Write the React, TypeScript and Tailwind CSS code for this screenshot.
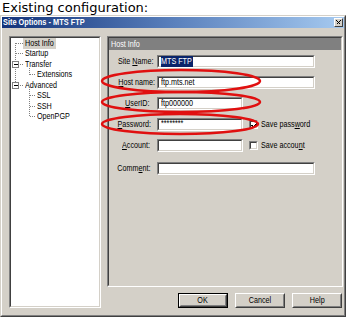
import React from 'react';
import clsx from 'clsx';

// Narrow text: Tahoma-at-small-scale look, squeezed horizontally
function T({ children, o = 'left', bold, className }: { children: React.ReactNode; o?: 'left' | 'right' | 'center'; bold?: boolean; className?: string }) {
  return (
    <span
      className={clsx(
        'inline-block whitespace-nowrap',
        o === 'left' && 'origin-left',
        o === 'right' && 'origin-right',
        o === 'center' && 'origin-center',
        bold ? 'scale-x-[0.82]' : 'scale-x-[0.8]',
        className
      )}
    >
      {children}
    </span>
  );
}

// Win2000 style 3D frames
function Sunken({ className, innerClassName, children }: { className?: string; innerClassName?: string; children?: React.ReactNode }) {
  return (
    <div className={clsx('border border-t-[#808080] border-l-[#808080] border-b-white border-r-white', className)}>
      <div className={clsx('h-full w-full border border-t-[#404040] border-l-[#404040] border-b-[#d4d0c8] border-r-[#d4d0c8]', innerClassName ?? 'bg-white')}>
        {children}
      </div>
    </div>
  );
}

function Button({ label, isDefault }: { label: string; isDefault?: boolean }) {
  return (
    <div className={clsx('h-[15px] w-[50px]', isDefault && 'border border-black')}>
      <div className="h-full w-full border border-t-white border-l-white border-b-[#404040] border-r-[#404040]">
        <div className="flex h-full w-full items-center justify-center border border-t-[#d4d0c8] border-l-[#d4d0c8] border-b-[#808080] border-r-[#808080] text-[9px] leading-none text-black">
          <T o="center">{label}</T>
        </div>
      </div>
    </div>
  );
}

function Checkbox({ checked }: { checked?: boolean }) {
  return (
    <Sunken className="h-[9px] w-[9px] shrink-0">
      {checked && (
        <svg viewBox="0 0 7 7" className="block h-[7px] w-[7px]" shapeRendering="crispEdges">
          <path d="M0.5 3 L2.5 5 L6.5 1" stroke="#000" strokeWidth="1.4" fill="none" />
        </svg>
      )}
    </Sunken>
  );
}

interface FieldRowProps {
  label: React.ReactNode;
  value?: React.ReactNode;
  wide?: boolean;
  extra?: React.ReactNode;
  className?: string;
}

function FieldRow({ label, value, wide, extra, className }: FieldRowProps) {
  return (
    <div className={clsx('flex h-[13px] items-center', className)}>
      <div className="w-[41px] text-right text-[9px] leading-none text-black">
        <T o="right">{label}</T>
      </div>
      <Sunken className={clsx('ml-[7px] h-[13px]', wide ? 'w-[158px]' : 'w-[86px]')}>
        <div className="flex h-full items-center pl-[2px] text-[9px] leading-none text-black">{value}</div>
      </Sunken>
      {extra}
    </div>
  );
}

const treeItems = [
  { label: 'Host Info', child: false, selected: true },
  { label: 'Startup', child: false },
  { label: 'Transfer', child: false },
  { label: 'Extensions', child: true },
  { label: 'Advanced', child: false },
  { label: 'SSL', child: true },
  { label: 'SSH', child: true },
  { label: 'OpenPGP', child: true },
];

function TreeLines() {
  const c = (i: number) => 5.25 + i * 10.5;
  const dot = { stroke: '#808080', strokeWidth: 1, strokeDasharray: '1 1' };
  return (
    <svg className="pointer-events-none absolute left-0 top-0" width="90" height="90" shapeRendering="crispEdges">
      <line x1="4.5" y1={c(0)} x2="4.5" y2={c(4)} {...dot} />
      {[0, 1, 2, 4].map((i) => (
        <line key={i} x1="5" y1={Math.floor(c(i)) + 0.5} x2="12" y2={Math.floor(c(i)) + 0.5} {...dot} />
      ))}
      <line x1="18.5" y1={c(2) + 4} x2="18.5" y2={c(3)} {...dot} />
      <line x1="18.5" y1={c(4) + 4} x2="18.5" y2={c(7)} {...dot} />
      {[3, 5, 6, 7].map((i) => (
        <line key={i} x1="19" y1={Math.floor(c(i)) + 0.5} x2="24" y2={Math.floor(c(i)) + 0.5} {...dot} />
      ))}
      {[2, 4].map((i) => {
        const y = Math.floor(c(i));
        return (
          <g key={i}>
            <rect x="1.5" y={y - 3 + 0.5} width="6" height="6" fill="#fff" stroke="#808080" />
            <line x1="3" y1={y + 0.5} x2="7" y2={y + 0.5} stroke="#000" />
          </g>
        );
      })}
    </svg>
  );
}

export default function App() {
  return (
    <div className="relative h-[317px] w-[350px] overflow-hidden bg-white font-['Liberation_Sans',Arial,sans-serif]">
      <div className="h-[15px] pl-[2px] font-['DejaVu_Sans',sans-serif] text-[13px] leading-[15px] text-black">
        Existing configuration:
      </div>

      {/* dialog */}
      <div className="h-[302px] w-[346px] border border-t-[#d4d0c8] border-l-[#d4d0c8] border-b-[#404040] border-r-[#404040]">
        <div className="flex h-full w-full flex-col border border-t-white border-l-white border-b-[#808080] border-r-[#808080] bg-[#d4d0c8]">
          <div className="flex h-[11px] items-center justify-between bg-gradient-to-r from-[#14337a] via-[#5a80bc] to-[#a6caf0] pl-[1px] pr-[1px]">
            <span className="text-[9px] font-bold leading-none text-white">
              <T bold>Site Options - MTS FTP</T>
            </span>
            <div className="h-[9px] w-[9px] border border-t-white border-l-white border-b-[#404040] border-r-[#404040] bg-[#d4d0c8]">
              <svg viewBox="0 0 7 7" className="block h-[7px] w-[7px]" shapeRendering="crispEdges">
                <path d="M1.5 1.5 L5.5 5.5 M5.5 1.5 L1.5 5.5" stroke="#000" strokeWidth="1.3" />
              </svg>
            </div>
          </div>

          <div className="flex gap-[6px] pl-[7px] pt-[8px]">
            {/* tree */}
            <Sunken className="h-[272px] w-[92px]">
              <div className="relative">
                <TreeLines />
                {treeItems.map((item) => (
                  <div
                    key={item.label}
                    className={clsx('flex h-[10.5px] items-center text-[9px] leading-none text-black', item.child ? 'pl-[24px]' : 'pl-[12px]')}
                  >
                    <span className={clsx('py-[1px] pl-[2px]', item.selected && 'w-[33px] bg-[#d4d0c8]')}>
                      <T>{item.label}</T>
                    </span>
                  </div>
                ))}
              </div>
            </Sunken>

            {/* right column */}
            <div className="flex w-[236px] flex-col">
              <Sunken className="h-[251px] w-[236px]" innerClassName="bg-[#d4d0c8]">
                <div className="flex h-[12px] items-center bg-[#808080] pl-[2px] text-[9px] leading-none text-white">
                  <T>Host Info</T>
                </div>
                <div className="flex flex-col pt-[5px]">
                  <FieldRow
                    label={<>Site <u>N</u>ame:</>}
                    value={<T className="bg-[#0a246a] py-[1px] pr-[1px] text-white">MTS FTP</T>}
                    wide
                  />
                  <FieldRow className="mt-[8px]" label={<><u>H</u>ost name:</>} value={<T>ftp.mts.net</T>} wide />
                  <FieldRow className="mt-[8px]" label={<><u>U</u>serID:</>} value={<T>ftp000000</T>} />
                  <FieldRow
                    className="mt-[8px]"
                    label={<><u>P</u>assword:</>}
                    value={<T className="relative top-[-1px]">********</T>}
                    extra={
                      <div className="ml-[6px] flex items-center gap-[3px]">
                        <Checkbox checked />
                        <span className="text-[9px] leading-none text-black">
                          <T>Save pass<u>w</u>ord</T>
                        </span>
                      </div>
                    }
                  />
                  <FieldRow
                    className="mt-[8px]"
                    label={<><u>A</u>ccount:</>}
                    extra={
                      <div className="ml-[6px] flex items-center gap-[3px]">
                        <Checkbox />
                        <span className="text-[9px] leading-none text-black">
                          <T>Save accou<u>n</u>t</T>
                        </span>
                      </div>
                    }
                  />
                  <FieldRow className="mt-[10px]" label={<>Comm<u>e</u>nt:</>} wide />
                </div>
              </Sunken>

              <div className="mt-[6px] flex justify-end gap-[7px] pr-[1px]">
                <Button label="OK" isDefault />
                <Button label="Cancel" />
                <Button label="Help" />
              </div>
            </div>
          </div>
        </div>
      </div>

      {/* red markup ellipses */}
      <svg className="pointer-events-none absolute left-0 top-0" width="350" height="317">
        <ellipse cx="181" cy="81" rx="79" ry="11" fill="none" stroke="#e01010" strokeWidth="2.5" />
        <ellipse cx="181" cy="102" rx="79" ry="10" fill="none" stroke="#e01010" strokeWidth="2.5" />
        <ellipse cx="180" cy="124" rx="78" ry="10" fill="none" stroke="#e01010" strokeWidth="2.5" />
      </svg>
    </div>
  );
}
